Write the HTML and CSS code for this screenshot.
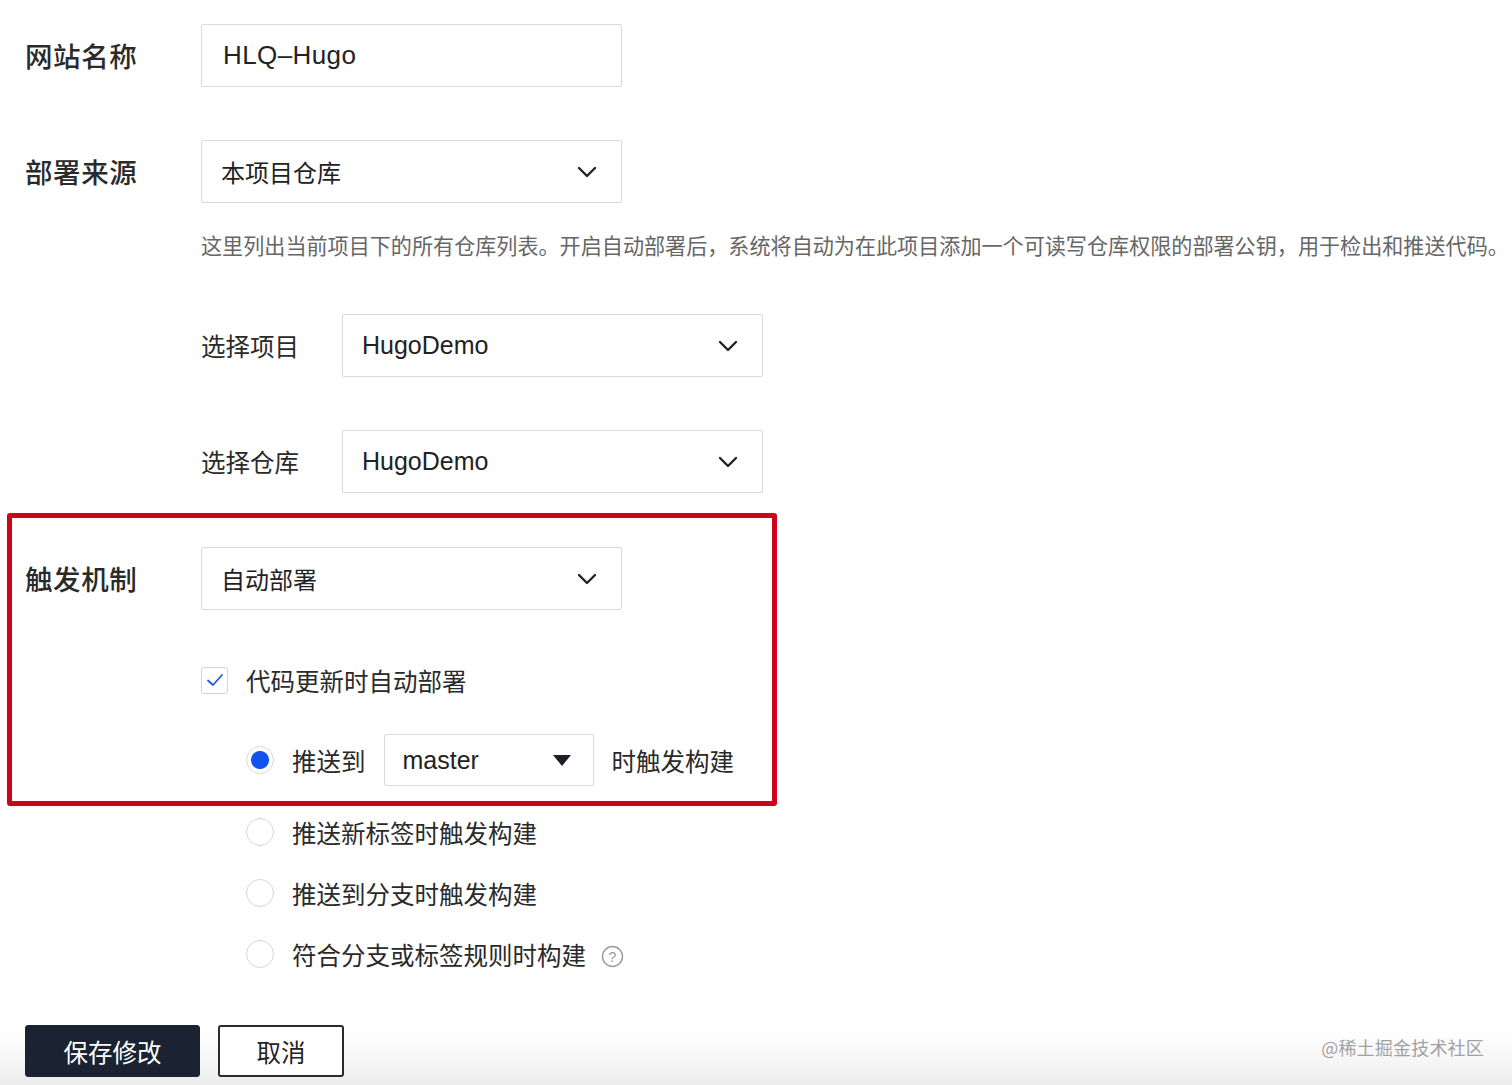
FILE: index.html
```html
<!DOCTYPE html>
<html lang="zh-CN">
<head>
<meta charset="utf-8">
<title>部署设置</title>
<link rel="stylesheet" href="styles.css">
</head>
<body>
<div class="form">
  <div class="row">
    <div class="label">网站名称</div>
    <div class="field input"><span class="value latin name">HLQ–Hugo</span></div>
  </div>

  <div class="row gap53">
    <div class="label">部署来源</div>
    <div class="field select"><span class="value cjk">本项目仓库</span>
      <svg class="chev" width="20" height="12" viewBox="0 0 20 12"><path d="M2 2 L10 10 L18 2" fill="none" stroke="#222" stroke-width="2.4" stroke-linecap="round" stroke-linejoin="round"/></svg>
    </div>
  </div>

  <p class="desc">这里列出当前项目下的所有仓库列表。开启自动部署后，系统将自动为在此项目添加一个可读写仓库权限的部署公钥，用于检出和推送代码。</p>

  <div class="subrow first">
    <div class="sublabel">选择项目</div>
    <div class="field select"><span class="value latin">HugoDemo</span>
      <svg class="chev" width="20" height="12" viewBox="0 0 20 12"><path d="M2 2 L10 10 L18 2" fill="none" stroke="#222" stroke-width="2.4" stroke-linecap="round" stroke-linejoin="round"/></svg>
    </div>
  </div>

  <div class="subrow gap53">
    <div class="sublabel">选择仓库</div>
    <div class="field select"><span class="value latin">HugoDemo</span>
      <svg class="chev" width="20" height="12" viewBox="0 0 20 12"><path d="M2 2 L10 10 L18 2" fill="none" stroke="#222" stroke-width="2.4" stroke-linecap="round" stroke-linejoin="round"/></svg>
    </div>
  </div>

  <div class="highlight">
    <div class="row">
      <div class="label">触发机制</div>
      <div class="field select"><span class="value cjk">自动部署</span>
        <svg class="chev" width="20" height="12" viewBox="0 0 20 12"><path d="M2 2 L10 10 L18 2" fill="none" stroke="#222" stroke-width="2.4" stroke-linecap="round" stroke-linejoin="round"/></svg>
      </div>
    </div>

    <div class="check-row">
      <span class="checkbox">
        <svg width="18" height="14" viewBox="0 0 18 14"><path d="M2 7.5 L7 12 L16 2" fill="none" stroke="#1f5fe0" stroke-width="1.8" stroke-linecap="round" stroke-linejoin="round"/></svg>
      </span>
      <span class="opt-text">代码更新时自动部署</span>
    </div>

    <div class="radio-row branch-row">
      <span class="radio checked"></span>
      <span class="opt-text">推送到</span>
      <div class="branch">
        <span class="value latin">master</span>
        <svg class="caret" width="18" height="11" viewBox="0 0 18 11"><path d="M0 0 H18 L9 11 Z" fill="#1d1f26"/></svg>
      </div>
      <span class="opt-text">时触发构建</span>
    </div>
  </div>

  <div class="radio-row plain r1">
    <span class="radio"></span>
    <span class="opt-text">推送新标签时触发构建</span>
  </div>
  <div class="radio-row plain">
    <span class="radio"></span>
    <span class="opt-text">推送到分支时触发构建</span>
  </div>
  <div class="radio-row plain">
    <span class="radio"></span>
    <span class="opt-text">符合分支或标签规则时构建</span>
    <svg class="help" width="23" height="23" viewBox="0 0 23 23">
      <circle cx="11.5" cy="11.5" r="10" fill="none" stroke="#9a9a9a" stroke-width="1.4"/>
      <text x="11.5" y="16.5" text-anchor="middle" font-size="14" fill="#9a9a9a" font-family="Liberation Sans, sans-serif">?</text>
    </svg>
  </div>

  <div class="actions">
    <button class="btn primary">保存修改</button>
    <button class="btn ghost">取消</button>
  </div>
</div>
<div class="watermark">@稀土掘金技术社区</div>
</body>
</html>
```

FILE: styles.css
```css
html {
  height: 1085px;
}
body {
  margin: 0;
  height: 1085px;
  overflow: hidden;
  font-family: "Liberation Sans", "Noto Sans CJK SC", sans-serif;
  color: #2b2b2b;
  background: linear-gradient(to bottom, #ffffff 0, #ffffff 1030px, #f6f6f6 1060px, #ececec 1085px);
  position: relative;
}
.cjk, .label, .sublabel, .opt-text, .desc, .btn, .watermark {
  font-family: "Noto Sans CJK SC", sans-serif;
}
.form {
  padding-top: 24px;
}
.row {
  display: flex;
  align-items: center;
  padding-left: 25px;
}
.gap53 {
  margin-top: 53px;
}
.label {
  width: 176px;
  font-size: 27.5px;
  font-weight: 500;
  color: #2a2a2a;
  letter-spacing: 0.6px;
  margin-top: -2px;
}
.field {
  box-sizing: border-box;
  width: 421px;
  height: 63px;
  border: 1.5px solid #d9d9d9;
  border-radius: 2px;
  background: #fff;
  display: flex;
  align-items: center;
  justify-content: space-between;
}
.input {
  padding-left: 21px;
}
.select {
  padding-left: 19px;
  padding-right: 24px;
}
.value {
  font-size: 25px;
  color: #222;
}
.value.name {
  font-size: 26px;
  letter-spacing: 0.4px;
}
.value.cjk {
  font-size: 24px;
}
.latin {
  font-family: "Liberation Sans", sans-serif;
}
.chev {
  display: block;
}
.desc {
  margin: 27px 0 0 201px;
  font-size: 21.1px;
  line-height: 30px;
  color: #666;
  white-space: nowrap;
}
.subrow {
  display: flex;
  align-items: center;
  padding-left: 201px;
}
.subrow.first {
  margin-top: 54px;
}
.sublabel {
  width: 141px;
  font-size: 24.5px;
  color: #2a2a2a;
}
.highlight {
  margin: 20px 0 0 7px;
  width: 770px;
  box-sizing: border-box;
  border: 5px solid #d0021b;
  border-radius: 3px;
  padding: 29px 0 15px 13px;
}
.highlight .row {
  padding-left: 0;
}
.check-row {
  display: flex;
  align-items: center;
  height: 40px;
  margin: 50px 0 0 176px;
}
.checkbox {
  box-sizing: border-box;
  width: 27px;
  height: 27px;
  border: 1.5px solid #d4d4d4;
  border-radius: 3px;
  display: flex;
  align-items: center;
  justify-content: center;
  margin-right: 18px;
}
.opt-text {
  font-size: 24.5px;
  color: #2a2a2a;
}
.radio-row {
  display: flex;
  align-items: center;
  height: 40px;
}
.branch-row {
  height: 52px;
  margin: 34px 0 0 221px;
}
.radio {
  box-sizing: border-box;
  width: 28px;
  height: 28px;
  border: 1.5px solid #d6d6d6;
  border-radius: 50%;
  margin-right: 18px;
  flex-shrink: 0;
  background: #fff;
}
.radio.checked {
  background: radial-gradient(circle, #1452f0 0, #1452f0 8.5px, #fff 9.5px);
}
.branch {
  box-sizing: border-box;
  width: 210px;
  height: 52px;
  margin: 0 18px;
  border: 1.5px solid #d9d9d9;
  border-radius: 2px;
  display: flex;
  align-items: center;
  justify-content: space-between;
  padding: 0 22px 0 18px;
}
.caret {
  display: block;
}
.plain {
  margin-left: 246px;
  margin-top: 21px;
}
.plain.r1 {
  margin-top: 6px;
}
.help {
  margin-left: 15px;
  margin-top: 4px;
}
.actions {
  display: flex;
  gap: 18px;
  margin: 51px 0 0 25px;
}
.btn {
  box-sizing: border-box;
  height: 52px;
  font-size: 24.5px;
  border-radius: 3px;
  padding: 0;
  cursor: pointer;
}
.primary {
  width: 175px;
  background: #1b2232;
  border: 1.5px solid #1b2232;
  color: #fff;
}
.ghost {
  width: 126px;
  background: #fff;
  border: 2px solid #2b2b2b;
  color: #222;
}
.watermark {
  position: absolute;
  right: 28px;
  top: 1034px;
  font-size: 18px;
  color: #a0a0a0;
  letter-spacing: 0.2px;
  text-shadow: 0 0 1px #fff;
}
```
